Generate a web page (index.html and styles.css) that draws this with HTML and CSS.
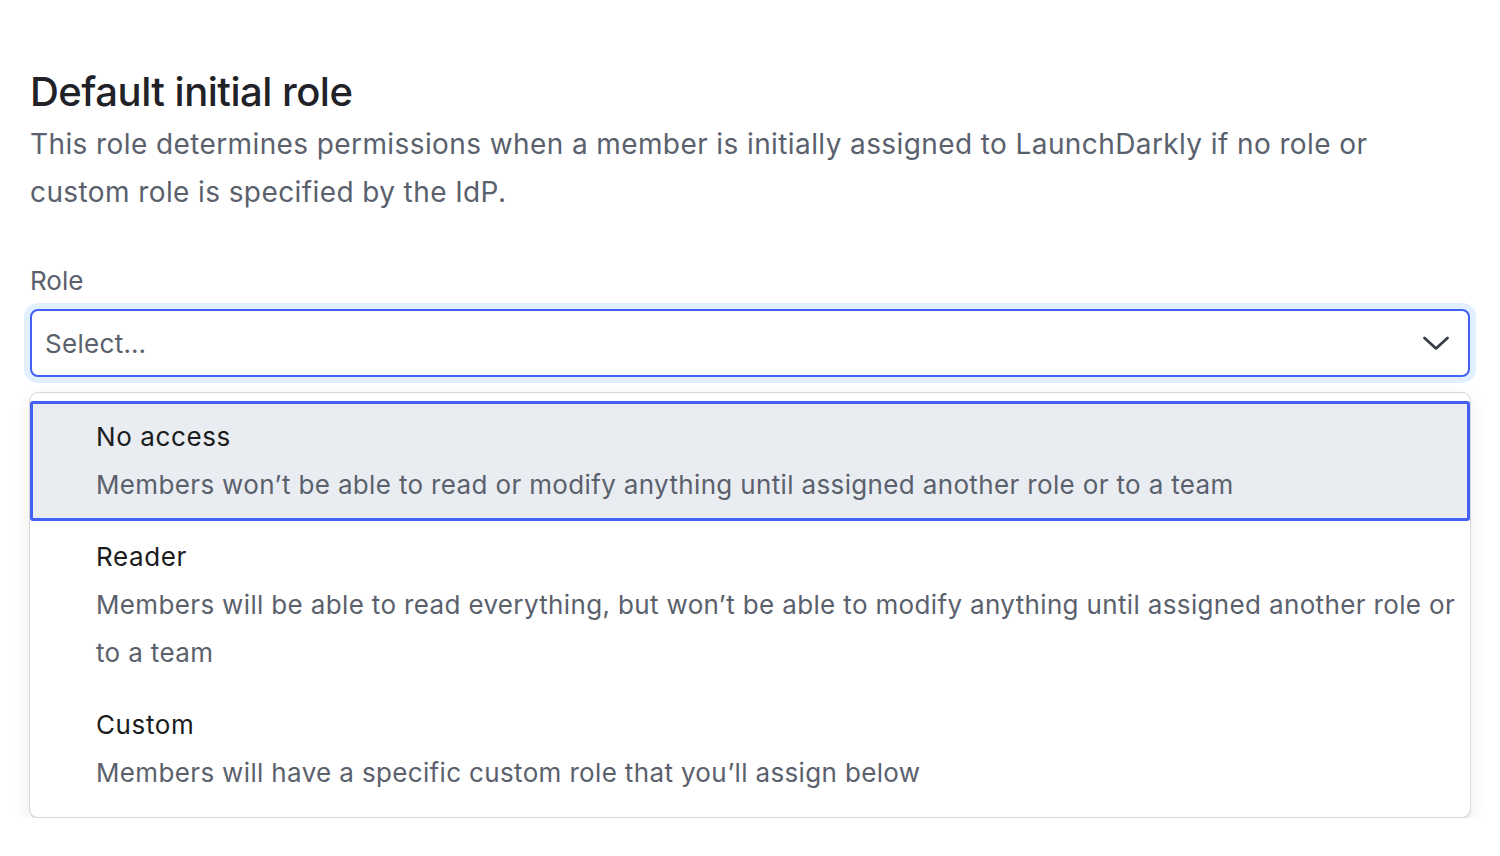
FILE: index.html
```html
<!DOCTYPE html>
<html>
<head>
<meta charset="utf-8">
<link rel="stylesheet" href="styles.css">
</head>
<body>
<main class="page">
  <h1 class="title">Default initial role</h1>
  <p class="lead">This role determines permissions when a member is initially assigned to LaunchDarkly if no role or custom role is specified by the IdP.</p>
  <div class="field">
    <label class="label">Role</label>
    <div class="select">
      <span class="placeholder">Select…</span>
      <svg class="chev" width="28" height="16" viewBox="0 0 28 16"><path d="M2.5 3 L14 13.5 L25.5 3" fill="none" stroke="#383d47" stroke-width="2.8" stroke-linecap="round" stroke-linejoin="round"/></svg>
    </div>
    <div class="menu">
      <div class="option active">
        <div class="opt-title">No access</div>
        <div class="opt-desc">Members won’t be able to read or modify anything until assigned another role or to a team</div>
      </div>
      <div class="option">
        <div class="opt-title">Reader</div>
        <div class="opt-desc">Members will be able to read everything, but won’t be able to modify anything until assigned another role or to a team</div>
      </div>
      <div class="option">
        <div class="opt-title">Custom</div>
        <div class="opt-desc">Members will have a specific custom role that you’ll assign below</div>
      </div>
    </div>
  </div>
</main>
</body>
</html>
```
FILE: styles.css
```css
html, body { margin: 0; padding: 0; background: #ffffff; }
body { font-family: Inter, "Noto Sans", sans-serif; }
.page { padding: 64px 30px 0 30px; }
.title { margin: 0; font-size: 40px; font-weight: 500; line-height: 56px; color: #212227; letter-spacing: -0.5px; }
.lead { margin: 0; font-size: 28px; line-height: 48px; color: #5a616d; font-weight: 400; letter-spacing: 0.4px; }
.field { margin-top: 47px; }
.label { display: block; font-size: 26px; line-height: 36px; color: #5a616d; margin-bottom: 10px; }
.select { display: flex; align-items: center; justify-content: space-between; box-sizing: border-box; height: 68px; padding: 0 18px 0 13px; border: 2px solid #4260f5; border-radius: 8px; background: #fff; box-shadow: 0 0 0 6px #e2efff; }
.placeholder { font-size: 26px; color: #5a616d; letter-spacing: 0.3px; }
.chev { display: block; }
.menu { margin: 15px -1px 0 -1px; border: 1px solid #d8d8d8; border-radius: 9px; background: #fff; padding: 8px 0 8px 0; box-shadow: 0 1px 0 #dcdcdc, 0 6px 18px rgba(0,0,0,0.08); }
.option { border: 3px solid transparent; border-radius: 3px; padding: 9px 6px 9px 63px; }
.option.active { background: #e9edf1; border-color: #4260f5; }
.opt-title { font-size: 26px; line-height: 48px; color: #1b1c20; letter-spacing: 0.6px; }
.opt-desc { font-size: 26px; line-height: 48px; color: #5a616d; letter-spacing: 0.35px; }
```
